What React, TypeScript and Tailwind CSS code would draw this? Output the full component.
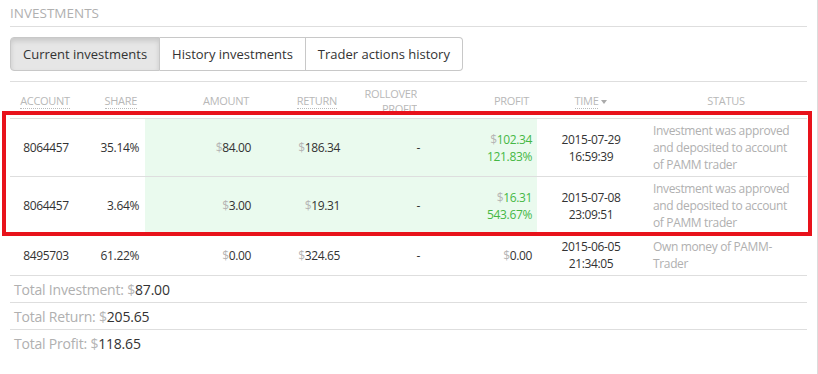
import React from "react";

const G = () => <span className="text-[#b5b5b5]">$</span>;

type Row = {
  account: string;
  share: string;
  amount: string;
  ret: string;
  profit: string;
  pct?: string;
  date: string;
  time: string;
  status: string;
  hl: boolean;
};

const rows: Row[] = [
  { account: "8064457", share: "35.14%", amount: "84.00", ret: "186.34", profit: "102.34", pct: "121.83%", date: "2015-07-29", time: "16:59:39", status: "Investment was approved and deposited to account of PAMM trader", hl: true },
  { account: "8064457", share: "3.64%", amount: "3.00", ret: "19.31", profit: "16.31", pct: "543.67%", date: "2015-07-08", time: "23:09:51", status: "Investment was approved and deposited to account of PAMM trader", hl: true },
  { account: "8495703", share: "61.22%", amount: "0.00", ret: "324.65", profit: "0.00", date: "2015-06-05", time: "21:34:05", status: "Own money of PAMM-Trader", hl: false },
];

export default function App() {
  return (
    <div className="w-[818px] h-[374px] bg-white border-r border-[#dcdcdc] overflow-hidden" style={{ fontFamily: '"Open Sans", sans-serif' }}>
      <div className="pl-[10px] pr-[10px] relative">
        <div className="pt-[5px] h-[27px] border-b border-[#dedede] text-[13.5px] leading-[16px] text-[#b0b0b0] uppercase">Investments</div>
        <div className="pt-[10px] pb-[10px] border-b border-[#dedede]">
          <div className="inline-flex text-[13px] text-[#333] leading-[20px]">
            <div className="px-[12px] py-[6px] border border-[#c8c8c8] rounded-l-[4px] bg-[#e6e6e6] shadow-[inset_0_3px_5px_rgba(0,0,0,0.125)]">Current investments</div>
            <div className="px-[12px] py-[6px] border border-l-0 border-[#c8c8c8] bg-white">History investments</div>
            <div className="px-[12px] py-[6px] border border-l-0 border-[#c8c8c8] rounded-r-[4px] bg-white">Trader actions history</div>
          </div>
        </div>
        <table className="w-[797px] table-fixed border-collapse text-[12px] leading-[17px] tracking-[-0.35px] text-[#333]">
          <colgroup>
            <col className="w-[70px]" />
            <col className="w-[65px]" />
            <col className="w-[112px]" />
            <col className="w-[89px]" />
            <col className="w-[78px]" />
            <col className="w-[113px]" />
            <col className="w-[108px]" />
            <col />
          </colgroup>
          <thead>
            <tr className="h-[36px] text-[11px] leading-[15px] tracking-[-0.3px] text-[#b8b8b8] uppercase border-b border-[#dedede]">
              <th className="font-normal text-center align-middle p-0"><span className="border-b border-dotted border-[#bbb]">Account</span></th>
              <th className="font-normal text-right pr-[8px] align-middle p-0"><span className="border-b border-dotted border-[#bbb]">Share</span></th>
              <th className="font-normal text-right pr-[8px] align-middle p-0">Amount</th>
              <th className="font-normal text-right pr-[9px] align-middle p-0"><span className="border-b border-dotted border-[#bbb]">Return</span></th>
              <th className="font-normal text-right pr-[7px] align-top pt-[4px]"><div className="h-[32px] overflow-hidden">Rollover<br />Profit</div></th>
              <th className="font-normal text-right pr-[8px] align-middle p-0">Profit</th>
              <th className="font-normal text-center align-middle p-0">
                <span className="border-b border-dotted border-[#bbb]">Time</span>
                <span className="inline-block ml-[3px] align-middle border-l-[3px] border-r-[3px] border-t-[4px] border-l-transparent border-r-transparent border-t-[#aaa]" />
              </th>
              <th className="font-normal text-center align-middle p-0">Status</th>
            </tr>
          </thead>
          <tbody>
            {rows.map((r, i) => {
              const bg = r.hl ? "bg-[#eafaee]" : "";
              return (
                <tr key={i} className="border-b border-[#dedede]">
                  <td className="text-center align-middle py-[3px] pl-[2px]">{r.account}</td>
                  <td className="text-right align-middle py-[3px] pr-[6px]">{r.share}</td>
                  <td className={`text-right align-middle py-[3px] pr-[6px] ${bg}`}><G />{r.amount}</td>
                  <td className={`text-right align-middle py-[3px] pr-[6px] ${bg}`}><G />{r.ret}</td>
                  <td className={`text-right align-middle py-[3px] pr-[4px] ${bg}`}>-</td>
                  <td className={`text-right align-middle py-[3px] pr-[5px] ${bg}`}>
                    <div className={r.pct ? "text-[#45b845]" : ""}><G />{r.profit}</div>
                    {r.pct && <div className="text-[#45b845]">{r.pct}</div>}
                  </td>
                  <td className="text-center align-middle py-[3px]">
                    <div>{r.date}</div>
                    <div>{r.time}</div>
                  </td>
                  <td className="align-top py-[3px] pl-[8px] pr-[14px] text-[#b0b0b0]">{r.status}</td>
                </tr>
              );
            })}
          </tbody>
        </table>
        <div className="text-[14px] leading-[20px] tracking-[-0.2px]">
          <div className="h-[27px] pt-[4px] pl-[4px] border-b border-[#dedede] text-[#b0b0b0]">Total Investment: <G /><span className="text-[#333]">87.00</span></div>
          <div className="h-[27px] pt-[4px] pl-[4px] border-b border-[#dedede] text-[#b0b0b0]">Total Return: <G /><span className="text-[#333]">205.65</span></div>
          <div className="h-[27px] pt-[4px] pl-[4px] text-[#b0b0b0]">Total Profit: <G /><span className="text-[#333]">118.65</span></div>
        </div>
        <div className="absolute left-[2px] top-[111px] w-[810px] h-[125px] border-[4px] border-[#e8121b] pointer-events-none" />
      </div>
    </div>
  );
}
